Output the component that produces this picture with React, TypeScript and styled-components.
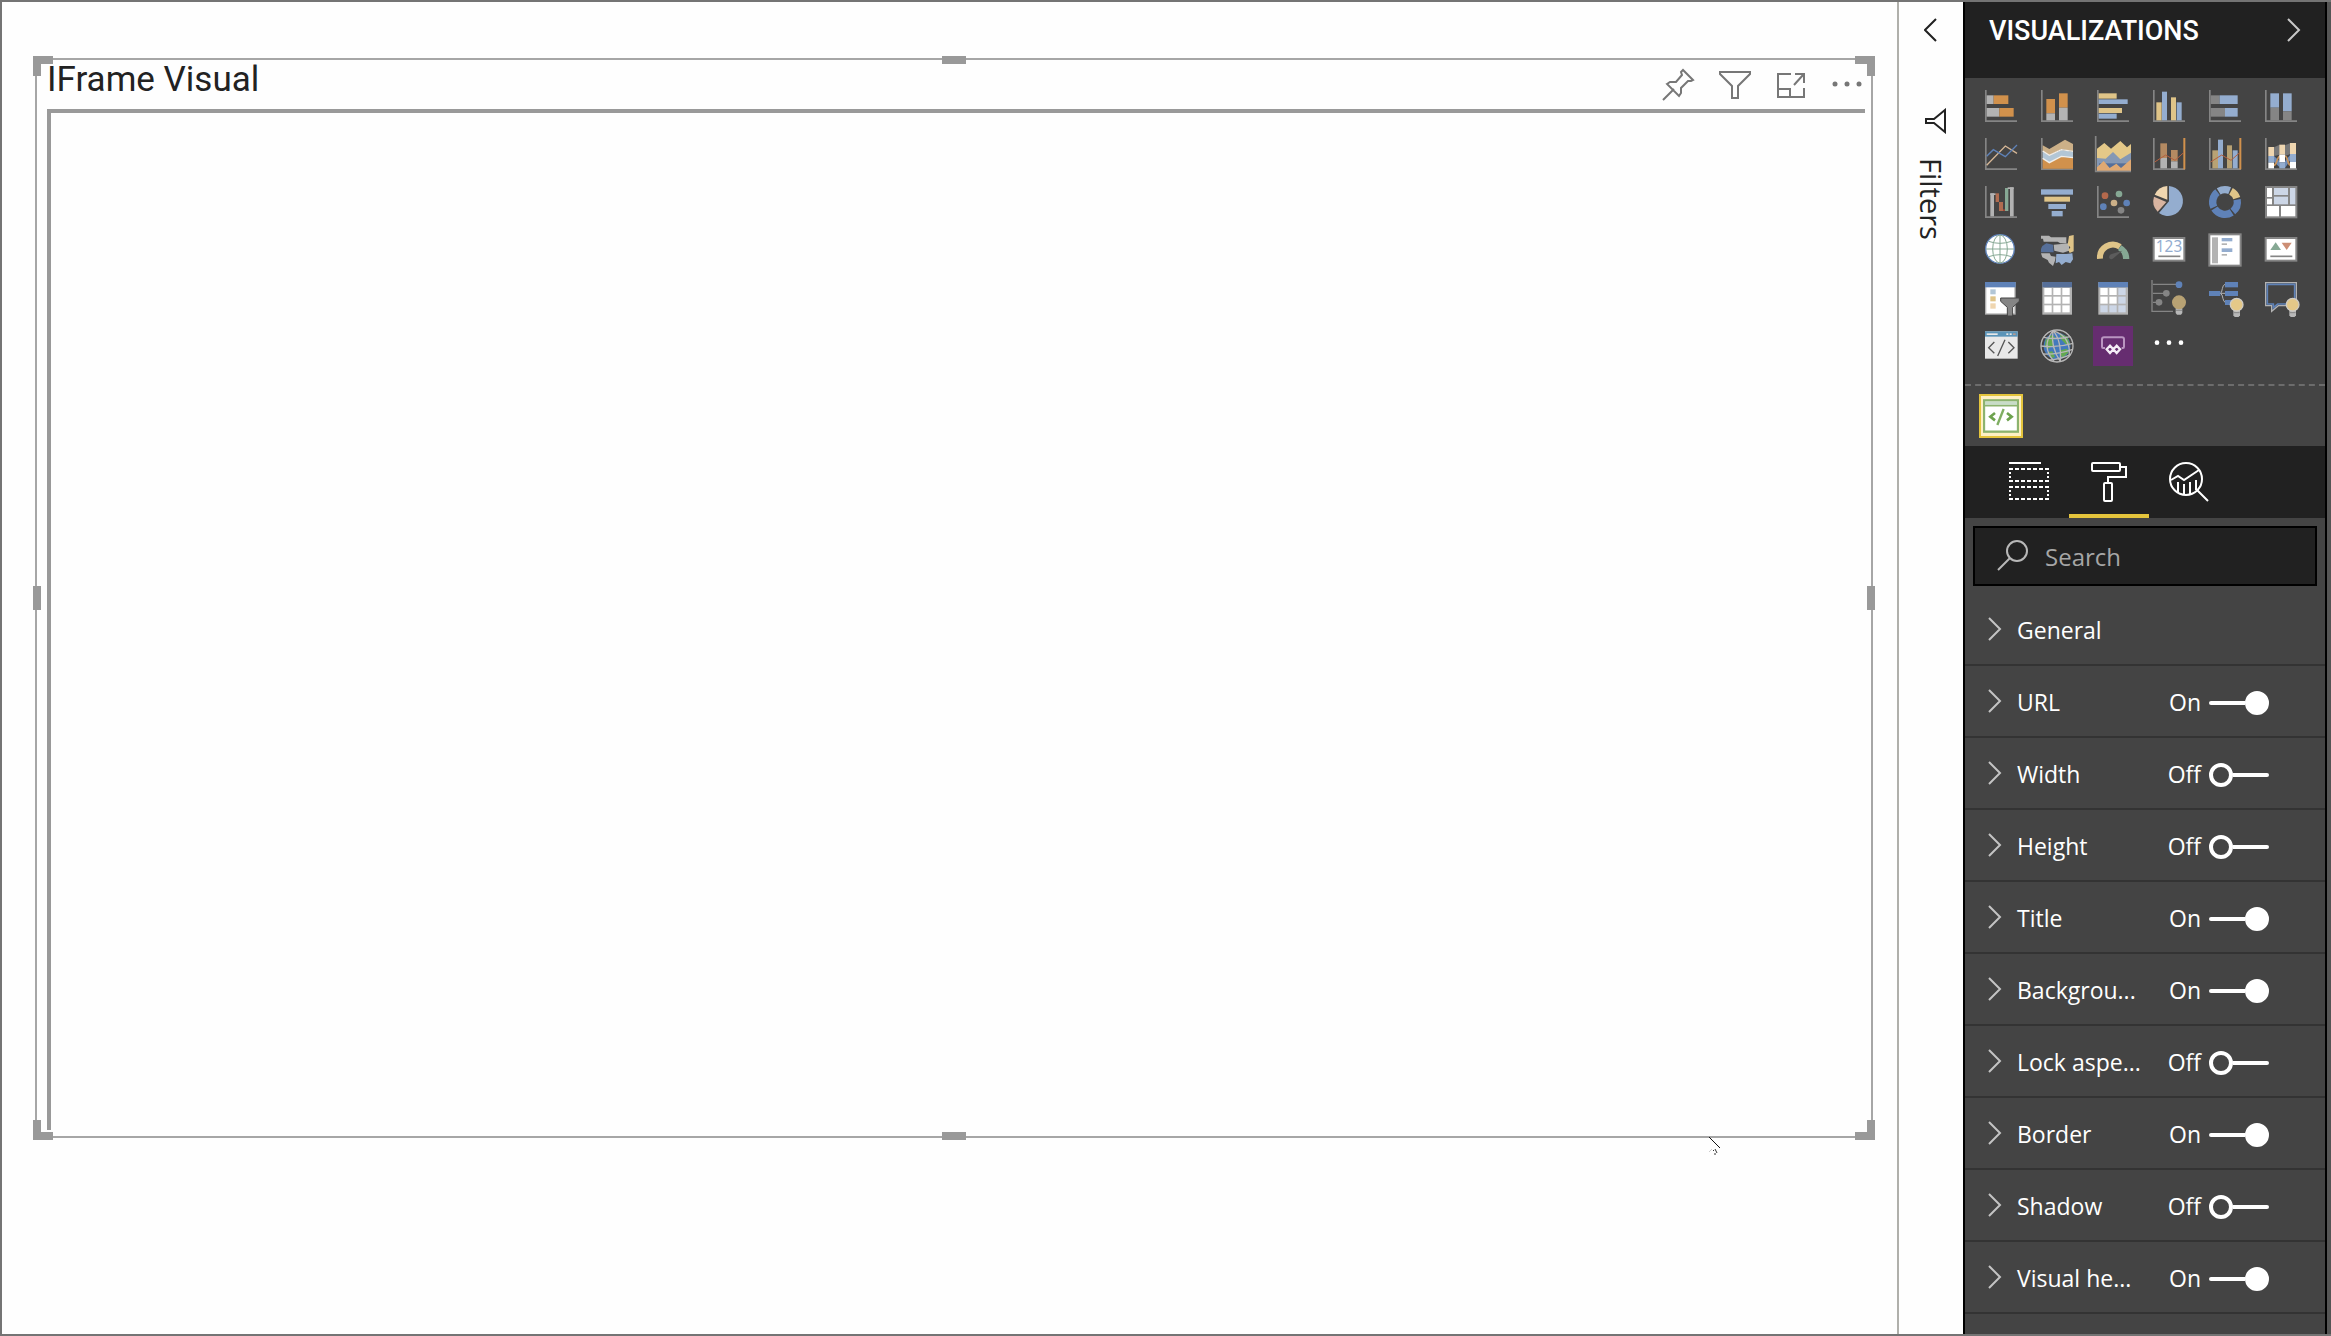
import React from "react";
import styled, { createGlobalStyle, css } from "styled-components";

const Global = createGlobalStyle`
  *, *::before, *::after { box-sizing: border-box; }
  body { margin: 0; font-family: "Open Sans", "Noto Sans", sans-serif; color: #222; }
  button { font: inherit; color: inherit; background: none; border: 0; padding: 0; margin: 0; display: flex; align-items: center; }
`;

const Window = styled.div`
  display: flex;
  height: 100vh;
  overflow: hidden;
  border: solid #747474;
  border-width: 2px 0 2px 2px;
  background: #fefefe;
`;

const Canvas = styled.main`
  position: relative;
  flex: 1;
  min-width: 0;
  display: flex;
  padding: 56px 24px 196px 33px;
`;

const Frame = styled.section`
  position: relative;
  flex: 1;
  display: flex;
  flex-direction: column;
  border: 2px solid #a6a6a6;
`;

const FrameHeader = styled.header`
  display: flex;
  justify-content: space-between;
  height: 49px;
  padding: 0 8px 0 10px;
`;

const FrameTitle = styled.h1`
  margin: 0;
  font: 400 35px/40px Roboto, sans-serif;
`;

const FrameActions = styled.div`
  display: flex;
  align-items: center;
  gap: 24px;
`;

const Content = styled.div`
  flex: 1;
  margin: 0 6px 6px 10px;
  border: solid #999;
  border-width: 4px 0 0 4px;
`;

const cornerSides = {
  tl: css`top: -4px; left: -4px; border-width: 8px 0 0 8px;`,
  tr: css`top: -4px; right: -4px; border-width: 8px 8px 0 0;`,
  bl: css`bottom: -4px; left: -4px; border-width: 0 0 8px 8px;`,
  br: css`bottom: -4px; right: -4px; border-width: 0 8px 8px 0;`,
};

const Corner = styled.span<{ $at: keyof typeof cornerSides }>`
  position: absolute;
  width: 20px;
  height: 20px;
  border: 0 solid #999;
  ${(p) => cornerSides[p.$at]}
`;

const edgeSides = {
  t: css`top: -4px; left: calc(50% - 12px); width: 24px; height: 8px;`,
  b: css`bottom: -4px; left: calc(50% - 12px); width: 24px; height: 8px;`,
  l: css`left: -4px; top: calc(50% - 12px); width: 8px; height: 24px;`,
  r: css`right: -4px; top: calc(50% - 12px); width: 8px; height: 24px;`,
};

const Edge = styled.span<{ $at: keyof typeof edgeSides }>`
  position: absolute;
  background: #999;
  ${(p) => edgeSides[p.$at]}
`;

const Cursor = styled.svg`
  position: absolute;
  right: 173px;
  bottom: 176px;
`;

const FiltersRail = styled.aside`
  width: 68px;
  border-left: 2px solid #b0b0ab;
  border-right: 2px solid #000;
  display: flex;
  flex-direction: column;
  align-items: center;
  padding-top: 16px;
`;

const RailButton = styled.button`
  flex-direction: column;
  gap: 24px;
  margin-top: 66px;
`;

const RailLabel = styled.span`
  writing-mode: vertical-rl;
  font-size: 29px;
  line-height: 40px;
`;

const Panel = styled.aside`
  width: 366px;
  background: #444;
  border-right: 4px solid #555;
  display: flex;
`;

const PanelBody = styled.div`
  flex: 1;
  min-width: 0;
  overflow: hidden;
  border-right: 2px solid #000;
`;

const PanelHeader = styled.header`
  display: flex;
  justify-content: space-between;
  height: 76px;
  padding: 8px 24px 0 24px;
  background: #212121;
  color: #fff;
`;

const PanelTitle = styled.h2`
  margin: 0;
  font: 500 27px/42px Roboto, sans-serif;
`;

const CollapseButton = styled.button`
  height: 40px;
`;

const Gallery = styled.div`
  display: grid;
  grid-template-columns: repeat(6, 56px);
  grid-auto-rows: 48px;
  padding: 4px 8px 14px;
  border-bottom: 2px dashed #6c6c6c;
`;

const IconButton = styled.button`
  justify-content: center;
  svg { overflow: visible; }
`;

const Custom = styled.div`
  height: 60px;
  padding: 8px 14px;
`;

const SelectedVisual = styled.button`
  width: 44px;
  height: 44px;
  justify-content: center;
  background: #fdf0c4;
  border: 2px solid #e4c43c;
`;

const Tabs = styled.nav`
  display: flex;
  height: 72px;
  padding-left: 24px;
  background: #212121;
`;

const Tab = styled.button<{ $active?: boolean }>`
  width: 80px;
  justify-content: center;
  border-top: 4px solid transparent;
  border-bottom: 4px solid ${(p) => (p.$active ? "#e4c43c" : "transparent")};
`;

const SearchBox = styled.label`
  display: flex;
  align-items: center;
  gap: 16px;
  height: 60px;
  margin: 8px;
  padding: 0 22px;
  background: #212121;
  border: 2px solid #000;
`;

const SearchInput = styled.input`
  flex: 1;
  min-width: 0;
  padding: 2px 0 0;
  border: 0;
  outline: 0;
  background: none;
  color: #fff;
  font: 24px/32px "Open Sans", "Noto Sans", sans-serif;
  &::placeholder { color: #a6a6a6; opacity: 1; }
`;

const Options = styled.ul`
  margin: 0;
  padding: 0;
  list-style: none;
`;

const Option = styled.li`
  display: flex;
  align-items: center;
  justify-content: space-between;
  height: 72px;
  padding: 0 56px 0 23px;
  border-bottom: 2px solid #333;
  color: #fff;
  font-size: 23px;
  line-height: 32px;
`;

const Expander = styled.button`
  gap: 15px;
`;

const OptionName = styled.span`
  padding-top: 2px;
`;

const Toggle = styled.label`
  display: flex;
  align-items: center;
  gap: 8px;
  padding-top: 4px;
`;

const ToggleState = styled.span`
  padding-bottom: 2px;
`;

const Switch = styled.input`
  appearance: none;
  display: flex;
  align-items: center;
  width: 60px;
  height: 24px;
  margin: 0;
  &::before {
    content: "";
    order: 1;
    width: 24px;
    height: 24px;
    border: 4px solid #fff;
    border-radius: 50%;
  }
  &::after {
    content: "";
    order: 2;
    flex: 1;
    height: 4px;
    border-radius: 0 2px 2px 0;
    background: #fff;
  }
  &:checked::before { order: 2; background: #fff; }
  &:checked::after { order: 1; border-radius: 2px 0 0 2px; }
`;

const BLUE = "#94adcf";
const DEEP = "#5f82b8";
const YEL = "#dfc488";
const ORG = "#d1914c";
const GR = "#b3b3b3";
const DG = "#858585";
const GREEN = "#86a894";
const PEACH = "#efd6b0";

type BoxSpec = [number, number, number, number, string];

/* Rectangles given as left, top, right, bottom, colour. */
const Boxes = ({ of }: { of: BoxSpec[] }) => (
  <>
    {of.map(([l, t, r, b, fill], i) => (
      <rect key={i} x={l} y={t} width={r - l} height={b - t} fill={fill} />
    ))}
  </>
);

const Axis = () => <path d="M2.5 0V93.500H96" fill="none" stroke={DG} strokeWidth="5" />;

const Bulb = ({ x, y, fill, rim }: { x: number; y: number; fill: string; rim: string }) => (
  <g>
    <path d={`M${x - 10} ${y + 14}h20v18l-4 5h-12l-4-5z`} fill="#b8b8b8" />
    <circle cx={x} cy={y} r="19" fill={fill} stroke={rim} strokeWidth="4" />
    <path d={`M${x - 9} ${y + 24}h18`} stroke="#888" strokeWidth="3" />
  </g>
);

const Arc = ({ from, to, fill }: { from: number; to: number; fill: string }) => (
  <circle cx="48" cy="48" r="37" fill="none" stroke={fill} strokeWidth="22" pathLength="360"
    strokeDasharray={`${to - from} ${360 - to + from}`} transform={`rotate(${from - 90} 48 48)`} />
);

const TableCells = ({ tint }: { tint: string }) => (
  <>
    {[18, 44, 70].map((y, r) =>
      [10, 37, 64].map((x, c) => (
        <rect key={`${r}${c}`} x={x} y={y} width="22" height="21" fill={r === 2 || c === 2 ? tint : "#fff"} />
      ))
    )}
  </>
);

const visuals: [string, React.ReactNode][] = [
  ["Stacked bar chart", <><Axis /><Boxes of={[[5, 16, 26, 42, GR], [26, 16, 70, 42, ORG], [5, 54, 43, 80, GR], [43, 54, 86, 80, ORG]]} /></>],
  ["Stacked column chart", <><Axis /><Boxes of={[[16, 27, 42, 70, ORG], [16, 70, 42, 91, GR], [54, 10, 80, 53, ORG], [54, 53, 80, 91, GR]]} /></>],
  ["Clustered bar chart", <><Axis /><Boxes of={[[5, 10, 59, 26, YEL], [5, 28, 92, 42, BLUE], [5, 54, 75, 69, YEL], [5, 71, 59, 86, BLUE]]} /></>],
  ["Clustered column chart", <><Axis /><Boxes of={[[10, 37, 26, 91, YEL], [27, 5, 42, 91, BLUE], [54, 22, 69, 91, YEL], [71, 37, 86, 91, BLUE]]} /></>],
  ["100% stacked bar chart", <><Axis /><Boxes of={[[5, 16, 32, 42, DG], [32, 16, 86, 42, BLUE], [5, 54, 48, 80, DG], [48, 54, 86, 80, BLUE]]} /></>],
  ["100% stacked column chart", <><Axis /><Boxes of={[[16, 10, 42, 53, BLUE], [16, 53, 42, 91, DG], [54, 10, 80, 64, BLUE], [54, 64, 80, 91, DG]]} /></>],
  ["Line chart", <><Axis /><g fill="none" strokeWidth="4"><path d="M5 82 61 24 96 46" stroke="#d6b796" /><path d="M5 55 25 35 61 56 96 21" stroke={DEEP} /></g></>],
  ["Area chart", <><Axis />
    <path d="M5 22 25 33 72 5 96 18V40L61 34 25 52 5 40Z" fill="#ccb088" />
    <path d="M5 40 25 52 61 36 96 41V60L61 56 25 74 5 62Z" fill="#b2c6d6" />
    <path d="M5 62 25 74 61 56 96 60V92H5Z" fill={ORG} />
    <path d="M5 39 25 52 61 35 96 40M5 61 25 74 61 55 96 59" fill="none" stroke="#f4efe8" strokeWidth="4" /></>],
  ["Stacked area chart", <>
    <path d="M-4-6V100H102" fill="none" stroke={DG} strokeWidth="5" />
    <path d="M0 32 22 15 42 32 70 9 90 28 102 18V92H0Z" fill="#e4c888" />
    <path d="M0 60 26 62 48 42 70 64 102 44V98H0Z" fill="#8598b4" />
    <path d="M6 76H98V98H6Z" fill="#566f99" />
    <path d="M0 88 20 69 38 90 58 77 72 90 102 64V98H0Z" fill="#e0a972" /></>],
  ["Line and stacked column chart", <><Axis />
    <Boxes of={[[22, 16, 42, 60, "#b48a62"], [22, 60, 42, 91, GR], [54, 36, 74, 70, "#b48a62"], [54, 70, 74, 91, GR], [91, 0, 97, 94, ORG]]} />
    <path d="M5 72 38 51 66 67 92 44" fill="none" stroke="#b5603f" strokeWidth="3" /></>],
  ["Line and clustered column chart", <><Axis />
    <Boxes of={[[10, 37, 27, 91, "#b8a274"], [27, 5, 42, 91, BLUE], [54, 22, 69, 91, "#b8a274"], [71, 37, 86, 91, BLUE], [91, 0, 97, 94, ORG]]} />
    <path d="M5 72 38 51 66 67 92 44" fill="none" stroke="#b5603f" strokeWidth="3" /></>],
  ["Ribbon chart", <><Axis />
    <path d="M27 28 44 20V50L27 54ZM60 22 76 15V48L60 54Z" fill="#777" />
    <path d="M27 54 44 70V88L27 72ZM60 70 76 50V66L60 90Z" fill="#6e8cb8" />
    <path d="M27 82C38 80 34 56 46 54M60 54C70 56 66 78 76 82" fill="none" stroke="#c99258" strokeWidth="5" />
    <Boxes of={[[10, 27, 27, 54, PEACH], [10, 54, 27, 74, BLUE], [10, 74, 27, 91, "#fff"], [43, 20, 60, 50, PEACH], [43, 50, 60, 73, "#fff"], [43, 73, 60, 91, BLUE], [75, 15, 93, 48, PEACH], [75, 48, 93, 72, BLUE], [75, 72, 93, 91, "#fff"]]} /></>],
  ["Waterfall chart", <><Axis /><Boxes of={[[16, 22, 32, 27, GR], [16, 22, 27, 91, GR], [32, 22, 42, 48, "#b06c50"], [42, 48, 54, 75, "#b06c50"], [54, 70, 62, 75, "#a04838"], [60, 6, 70, 75, GREEN], [68, 4, 86, 9, GR], [75, 4, 86, 91, GR]]} /></>],
  ["Funnel", <Boxes of={[[0, 10, 96, 26, BLUE], [10, 32, 87, 47, YEL], [22, 54, 75, 69, BLUE], [32, 75, 65, 91, BLUE]]} />],
  ["Scatter chart", <><Axis />
    {([[24, 29, "#b4694c"], [66, 24, GREEN], [51, 51, "#ccb088"], [19, 62, DEEP], [89, 51, DEEP], [72, 73, DG]] as [number, number, string][]).map(([x, y, c]) => <circle key={x} cx={x} cy={y} r="10" fill={c} />)}</>],
  ["Pie chart", <>
    <path d="M48 0A45 45 0 1 1 18 81L48 46Z" fill={BLUE} />
    <path d="M43 0V41L5 26A45 45 0 0 1 43 0Z" fill={PEACH} />
    <path d="M3 32 40 48 14 77A45 45 0 0 1 3 32Z" fill="#d8b4a0" /></>],
  ["Donut chart", <><Arc from={-31} to={22} fill={BLUE} /><Arc from={29} to={72} fill={YEL} /><Arc from={79} to={140} fill={DEEP} /><Arc from={147} to={238} fill={DEEP} /><Arc from={245} to={322} fill={DEEP} /></>],
  ["Treemap", <Boxes of={[[0, 0, 97, 97, DG], [6, 6, 21, 33, "#fff"], [6, 38, 21, 55, "#fff"], [27, 6, 69, 27, "#ccd6e6"], [27, 32, 69, 55, "#ccd6e6"], [75, 6, 91, 55, "#ccd6e6"], [6, 60, 42, 91, "#fff"], [48, 60, 91, 91, "#fff"]]} />],
  ["Map", <>
    <circle cx="45" cy="45" r="43" fill="#fff" stroke={DEEP} strokeWidth="4" />
    <g fill="none" stroke={GREEN} strokeWidth="3"><ellipse cx="45" cy="45" rx="22" ry="42" /><path d="M45 3V87M3 45H87M11 22Q45 34 79 22M11 68Q45 56 79 68" /></g></>],
  ["Filled map", <>
    <path d="M0 5H24L30 10H76V28H58L50 23H8L6 14H0ZM38 32 84 28V50L66 56 40 50Z" fill={GR} />
    <path d="M4 36 16 28 36 32 38 55H0V44Z" fill="#566f99" />
    <path d="M0 58H26L30 66 44 68 42 80 36 96 24 86 20 78 4 70Z" fill={GR} />
    <path d="M46 60H76L94 58 96 76 88 88 74 84 62 93 54 84 44 88Z" fill={BLUE} />
    <path d="M84 6 98 3V52L86 57 82 48 88 40 80 32Z" fill={YEL} /></>],
  ["Gauge", <>
    <path d="M9 75A39 39 0 0 1 69 39" fill="none" stroke={YEL} strokeWidth="18" transform="translate(0 -1)" />
    <path d="M73 34A48 48 0 0 1 97 75H78A30 30 0 0 0 63 48Z" fill={GREEN} />
    <path d="M36 70Q36 62 44 60L76 50 50 72Q40 80 36 70Z" fill="#5c5c5c" /></>],
  ["Card", <>
    <rect x="2" y="12" width="92" height="68" fill="#fff" stroke={DG} strokeWidth="6" />
    <text x="48" y="54" textAnchor="middle" fontFamily="Noto Sans, sans-serif" fontSize="46" fill={BLUE}>123</text>
    <path d="M16 67H82" stroke={DG} strokeWidth="5" /></>],
  ["Multi-row card", <>
    <rect x="1" y="1" width="94" height="94" fill="#fff" stroke={DG} strokeWidth="6" />
    <Boxes of={[[9, 10, 27, 88, GR], [38, 12, 70, 22, BLUE], [38, 28, 54, 33, GR], [38, 43, 70, 54, BLUE], [38, 60, 54, 65, GR]]} /></>],
  ["KPI", <>
    <rect x="2" y="12" width="92" height="68" fill="#fff" stroke={DG} strokeWidth="6" />
    <path d="M16 48 32 25 48 48Z" fill={GREEN} /><path d="M50 26H80L65 48Z" fill="#cc8e74" />
    <path d="M16 67H82" stroke={DG} strokeWidth="5" /></>],
  ["Slicer", <>
    <rect x="2" y="2" width="88" height="94" fill="#fff" stroke={GR} strokeWidth="4" />
    <Boxes of={[[0, 0, 92, 16, DEEP], [16, 22, 32, 37, "#b2c6d6"], [16, 43, 32, 58, YEL], [16, 64, 32, 80, PEACH]]} />
    <path d="M47 48H103V58L83 76V102H67V76L47 58Z" fill={DG} stroke="#444" strokeWidth="3" /></>],
  ["Table", <><Boxes of={[[4, 0, 93, 98, GR], [4, 0, 93, 16, "#566f99"]]} /><TableCells tint="#fff" /></>],
  ["Matrix", <><Boxes of={[[4, 0, 93, 98, GR], [4, 0, 93, 16, DEEP]]} /><TableCells tint="#ccd6e6" /></>],
  ["Key influencers", <>
    <path d="M-3-6V88H60M0 7H70M0 34H34M0 61H14" fill="none" stroke={DG} strokeWidth="4" />
    <circle cx="78" cy="8" r="10" fill={DEEP} /><circle cx="40" cy="34" r="10" fill={DG} /><circle cx="18" cy="61" r="10" fill={DG} />
    <Bulb x={78} y={61} fill="#b8a274" rim="#b8a274" /></>],
  ["Decomposition tree", <>
    <path d="M32 34H48M48 7Q42 8 40 20 38 34 34 34 40 36 42 50 44 60 50 62" fill="none" stroke={GR} strokeWidth="3" />
    <Boxes of={[[0, 27, 34, 42, DEEP], [48, 0, 87, 16, DEEP], [48, 27, 87, 42, DEEP], [48, 54, 87, 69, DEEP]]} />
    <Bulb x={83} y={68} fill="#e4c888" rim="#d0ccc4" /></>],
  ["Q&A", <>
    <path d="M2 2H94V71H40L20 88V71H2Z" fill="#444" stroke={GR} strokeWidth="4" />
    <path d="M7 7H89V66H38L25 77V66H7Z" fill="none" stroke={DEEP} strokeWidth="5" />
    <Bulb x={83} y={68} fill="#e4c888" rim="#d0ccc4" /></>],
  ["Script visual", <>
    <Boxes of={[[0, 4, 98, 86, "#e8e8e8"], [0, 4, 98, 20, "#5b94b8"], [5, 10, 38, 15, "#e8e8e8"], [64, 10, 70, 15, "#e8e8e8"], [74, 10, 80, 15, "#e8e8e8"], [84, 10, 92, 15, "#b49a90"]]} />
    <path d="M28 36 11 53 28 70M70 36 87 53 70 70M60 29 38 78" fill="none" stroke="#555" strokeWidth="4" /></>],
  ["ArcGIS map", <>
    <circle cx="48" cy="48" r="40" fill="#4379bd" />
    <path d="M14 30 32 14 42 22 34 36 38 44 22 56 12 50ZM56 10 78 20 88 44 74 42 60 28ZM20 66 34 64 42 82 30 84ZM60 60 78 56 82 68 64 84 58 72Z" fill="#64a850" />
    <g fill="none" stroke="#b8b8b8" strokeWidth="4"><circle cx="48" cy="48" r="48" /><path d="M36 2Q-2 50 40 95M36 2Q28 50 58 95M36 2Q62 30 58 95M36 2Q92 20 84 80M8 22Q50 30 88 20M0 48Q50 54 96 40M6 72Q50 74 95 58M24 90Q60 88 88 74" /></g></>],
  ["Power Apps", <>
    <rect x="-12" y="-12" width="120" height="120" fill="#662d70" />
    <path d="M24 54H18Q15 54 15 50V28Q15 22 21 22H75Q81 22 81 28V50Q81 54 78 54H74" fill="none" stroke="#b994c0" strokeWidth="6" />
    <path d="M39 47 29 58 39 69 49 58ZM59 47 49 58 59 69 69 58Z" fill="#662d70" stroke="#f4ecf6" strokeWidth="7" />
  </>],
  ["More visuals", <g fill="#fff"><circle cx="12" cy="38" r="7" /><circle cx="48" cy="38" r="7" /><circle cx="84" cy="38" r="7" /></g>],
];

const options: { name: string; on?: boolean }[] = [
  { name: "General" },
  { name: "URL", on: true },
  { name: "Width", on: false },
  { name: "Height", on: false },
  { name: "Title", on: true },
  { name: "Backgrou...", on: true },
  { name: "Lock aspe...", on: false },
  { name: "Border", on: true },
  { name: "Shadow", on: false },
  { name: "Visual he...", on: true },
];

const Line = ({ w, h, d, color, weight = 2 }: { w: number; h: number; d: string; color: string; weight?: number }) => (
  <svg width={w} height={h} viewBox={`0 0 ${w} ${h}`} fill="none" stroke={color} strokeWidth={weight}>
    <path d={d} />
  </svg>
);

export default function App() {
  return (
    <>
      <Global />
      <Window>
        <Canvas>
          <Frame>
            <FrameHeader>
              <FrameTitle>IFrame Visual</FrameTitle>
              <FrameActions>
                <IconButton aria-label="Pin visual">
                  <Line w={32} h={32} color="#777" d="M0 31 11 20M4 15 7 13 13 13 19 6 18 3 20 1 30 11 28 12 25 12 18 19 18 24 16 27Z" />
                </IconButton>
                <IconButton aria-label="Filters on visual">
                  <Line w={32} h={32} color="#777" d="M1 3H31V5L19 17V29H13V17L1 5Z" />
                </IconButton>
                <IconButton aria-label="Focus mode">
                  <Line w={32} h={32} color="#777" d="M16 5H3V28H29V19M3 20H15V28M19 16 28 6M20 5H29V14" />
                </IconButton>
                <IconButton aria-label="More options">
                  <svg width="32" height="32" fill="#777"><circle cx="4" cy="15" r="2.500" /><circle cx="16" cy="15" r="2.500" /><circle cx="28" cy="15" r="2.500" /></svg>
                </IconButton>
              </FrameActions>
            </FrameHeader>
            <Content />
            <Corner $at="tl" /><Corner $at="tr" /><Corner $at="bl" /><Corner $at="br" />
            <Edge $at="t" /><Edge $at="b" /><Edge $at="l" /><Edge $at="r" />
          </Frame>
          <Cursor width="16" height="22" viewBox="0 0 16 22" fill="none">
            <path d="M1 1 12 12" stroke="#111" />
            <path d="M1 16 4 13" stroke="#ccc" />
            <path d="M5 14 6 15M7 13 9 17M6 18 8 18" stroke="#333" />
          </Cursor>
        </Canvas>

        <FiltersRail>
          <button aria-label="Expand filters"><Line w={14} h={24} color="#222" d="M12 1 1 12 12 23" /></button>
          <RailButton>
            <Line w={30} h={26} color="#222" d="M29 2V24L18 15H10V11H18Z" />
            <RailLabel>Filters</RailLabel>
          </RailButton>
        </FiltersRail>

        <Panel>
          <PanelBody>
            <PanelHeader>
              <PanelTitle>VISUALIZATIONS</PanelTitle>
              <CollapseButton aria-label="Collapse pane"><Line w={14} h={24} color="#c8c8c8" d="M1 1 12 12 1 23" /></CollapseButton>
            </PanelHeader>
            <Gallery>
              {visuals.map(([name, art]) => (
                <IconButton key={name} aria-label={name}>
                  <svg width="32" height="32" viewBox="0 0 96 96">{art}</svg>
                </IconButton>
              ))}
            </Gallery>
            <Custom>
              <SelectedVisual aria-label="IFrame visual">
                <svg width="36" height="34" viewBox="0 0 108 102">
                  <rect x="3" y="4" width="102" height="94" fill="#fff" stroke="#8cb36e" strokeWidth="7" />
                  <path d="M6 13H102" stroke="#c8dcc8" strokeWidth="9" />
                  <path d="M6 20H102" stroke="#8cb36e" strokeWidth="5" />
                  <path d="M36 42 22 53 36 64M72 42 86 53 72 64" fill="none" stroke="#6da24e" strokeWidth="8" />
                  <path d="M62 30 43 78" stroke="#7fae62" strokeWidth="7" />
                </svg>
              </SelectedVisual>
            </Custom>
            <Tabs>
              <Tab aria-label="Fields">
                <svg width="40" height="40" fill="none" stroke="#fff" strokeWidth="2">
                  <path d="M0 1H32" />
                  <path d="M0 7H40M0 19H40M0 25H40M0 37H40" strokeDasharray="4 2" />
                  <path d="M1 6V20M39 6V20M1 24V38M39 24V38" strokeDasharray="2 2" />
                </svg>
              </Tab>
              <Tab $active aria-label="Format">
                <svg width="40" height="40" fill="none" stroke="#fff" strokeWidth="2">
                  <rect x="3" y="1" width="28" height="8" rx="1" />
                  <path d="M31 5H37V15H19V21" />
                  <rect x="15" y="21" width="8" height="18" rx="1" />
                </svg>
              </Tab>
              <Tab aria-label="Analytics">
                <svg width="40" height="40" fill="none" stroke="#fff" strokeWidth="2">
                  <circle cx="17" cy="17" r="16" />
                  <path d="M28 28 39 39M2 18 9 14 15 18 30 8M9 20V30M15 22V33M21 20V32M27 18V28" />
                </svg>
              </Tab>
            </Tabs>
            <SearchBox>
              <svg width="32" height="32" fill="none" stroke="#b8b8b8" strokeWidth="2">
                <circle cx="20" cy="11" r="10" /><path d="M13 18 1 30" />
              </svg>
              <SearchInput placeholder="Search" aria-label="Search" />
            </SearchBox>
            <Options>
              {options.map(({ name, on }) => (
                <Option key={name}>
                  <Expander>
                    <Line w={14} h={24} color="#c4c4c4" d="M1 1 12 12 1 23" />
                    <OptionName>{name}</OptionName>
                  </Expander>
                  {on !== undefined && (
                    <Toggle>
                      <ToggleState>{on ? "On" : "Off"}</ToggleState>
                      <Switch type="checkbox" role="switch" aria-label={name} defaultChecked={on} />
                    </Toggle>
                  )}
                </Option>
              ))}
            </Options>
          </PanelBody>
        </Panel>
      </Window>
    </>
  );
}
